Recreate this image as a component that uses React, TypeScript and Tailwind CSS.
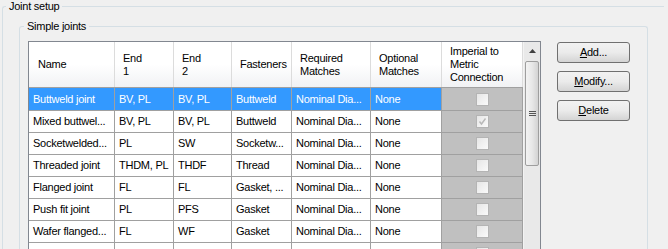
import React from "react";

const cols = [86, 59, 58, 60, 79, 71, 81];

const headers: React.ReactNode[] = [
  <>Name</>,
  <>End<br />1</>,
  <>End<br />2</>,
  <>Fasteners</>,
  <>Required<br />Matches</>,
  <>Optional<br />Matches</>,
  <>Imperial to<br />Metric<br />Connection</>,
];

const rows: { c: string[]; checked: boolean }[] = [
  { c: ["Buttweld joint", "BV, PL", "BV, PL", "Buttweld", "Nominal Dia...", "None"], checked: false },
  { c: ["Mixed buttwel...", "BV, PL", "BV, PL", "Buttweld", "Nominal Dia...", "None"], checked: true },
  { c: ["Socketwelded...", "PL", "SW", "Socketw...", "Nominal Dia...", "None"], checked: false },
  { c: ["Threaded joint", "THDM, PL", "THDF", "Thread", "Nominal Dia...", "None"], checked: false },
  { c: ["Flanged joint", "FL", "FL", "Gasket, ...", "Nominal Dia...", "None"], checked: false },
  { c: ["Push fit joint", "PL", "PFS", "Gasket", "Nominal Dia...", "None"], checked: false },
  { c: ["Wafer flanged...", "FL", "WF", "Gasket", "Nominal Dia...", "None"], checked: false },
  { c: ["", "", "", "", "", ""], checked: false },
];

function CheckBox({ checked }: { checked: boolean }) {
  return (
    <div className="w-[13px] h-[13px] border border-[#b4b4b4] bg-linear-to-br from-[#e6e6e6] to-[#fafafa] flex items-center justify-center">
      {checked && (
        <svg width="11" height="11" viewBox="0 0 11 11">
          <path d="M2.5 5.5 L4.5 8 L8.5 2.5" fill="none" stroke="#b8b8b8" strokeWidth="1.4" />
        </svg>
      )}
    </div>
  );
}

function Button({ u, rest }: { u: string; rest: string }) {
  return (
    <div className="w-[73px] h-[21px] rounded-[3px] border border-[#707070] bg-linear-to-b from-[#f2f2f2] via-[#ebebeb] to-[#d4d4d4] flex items-center justify-center text-black">
      <span>
        <span className="underline underline-offset-[1px]">{u}</span>
        {rest}
      </span>
    </div>
  );
}

export default function App() {
  return (
    <div className="w-[668px] h-[249px] overflow-hidden bg-[#f0f0f0] text-[11px] tracking-[-0.25px] text-black font-['Liberation_Sans',Arial,sans-serif]">
      <fieldset className="ml-[2px] w-[662px] h-[300px] border-t border-l border-[#d5dfe5] rounded-tl-[3px] p-0 m-0">
        <legend className="ml-[3px] px-[3px] leading-[13px]">Joint setup</legend>
        <fieldset className="ml-[16px] mt-[7px] w-[629px] h-[300px] border-t border-l border-r border-[#d5dfe5] rounded-t-[3px] p-0">
          <legend className="ml-[4px] px-[3px] leading-[13px]">Simple joints</legend>
          <div className="flex ml-[8px] mt-[8px]">
            <div className="w-[513px] h-[260px] border border-[#828790] flex bg-white">
              <div className="w-[494px] flex flex-col">
                <div className="flex h-[46px] border-b border-[#a0a0a0] bg-linear-to-b from-white via-white to-[#f1f2f4]">
                  {headers.map((h, i) => (
                    <div
                      key={i}
                      style={{ width: cols[i] }}
                      className={`shrink-0 h-full flex items-center border-r border-[#dcdcdc] leading-[13px] ${i === 0 ? "pl-[9px]" : "pl-[8px]"}`}
                    >
                      <div>{h}</div>
                    </div>
                  ))}
                </div>
                {rows.map((r, ri) => {
                  const sel = ri === 0;
                  return (
                    <div key={ri} className={`flex border-b border-[#a0a0a0] ${ri === 0 ? "h-[23px]" : "h-[22px]"}`}>
                      {r.c.map((t, ci) => (
                        <div
                          key={ci}
                          style={{ width: cols[ci] }}
                          className={`shrink-0 h-full flex items-center pl-[4px] border-r border-[#a0a0a0] whitespace-nowrap overflow-hidden ${sel ? "bg-[#3399ff] text-white" : "bg-white text-black"}`}
                        >
                          {t}
                        </div>
                      ))}
                      <div
                        style={{ width: cols[6] }}
                        className="shrink-0 h-full flex items-center justify-center border-r border-[#a0a0a0] bg-[#c0c0c0]"
                      >
                        <CheckBox checked={r.checked} />
                      </div>
                    </div>
                  );
                })}
              </div>
              <div className="w-[17px] flex flex-col bg-[#e9e9e9] border-l border-[#f3f3f3]">
                <div className="h-[17px] flex items-center justify-center">
                  <svg width="7" height="4" viewBox="0 0 7 4">
                    <path d="M0 4 L3.5 0 L7 4 Z" fill="#404040" />
                  </svg>
                </div>
                <div className="mt-[2px] mx-[1px] h-[105px] rounded-[2px] border border-[#9e9e9e] bg-linear-to-r from-[#f3f3f3] via-[#e8e8e8] to-[#d3d3d3] flex items-center justify-center">
                  <svg width="7" height="6" viewBox="0 0 7 6">
                    <path d="M0 0.5 H7 M0 2.5 H7 M0 4.5 H7" stroke="#555" strokeWidth="1" />
                  </svg>
                </div>
              </div>
            </div>
            <div className="ml-[16px] mt-[1px] flex flex-col gap-[8px]">
              <Button u="A" rest="dd..." />
              <Button u="M" rest="odify..." />
              <Button u="D" rest="elete" />
            </div>
          </div>
        </fieldset>
      </fieldset>
    </div>
  );
}
